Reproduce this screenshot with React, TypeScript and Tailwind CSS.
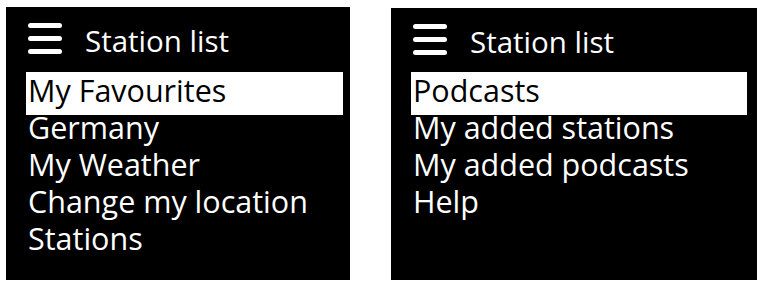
import React from "react";

const Burger = () => (
  <div className="flex flex-col justify-between w-[34px] h-[31px] mt-[16px]">
    <div className="h-[5px] rounded-full bg-white" />
    <div className="h-[5px] rounded-full bg-white" />
    <div className="h-[5px] rounded-full bg-white" />
  </div>
);

const Screen = ({
  items,
  className,
  headerClass,
}: {
  items: string[];
  className: string;
  headerClass: string;
}) => (
  <div className={`bg-black text-white ${className}`}>
    <div className={`flex items-start gap-[23px] pl-[2px] ${headerClass}`}>
      <Burger />
      <span className="text-[29.5px] leading-none mt-[19px]">Station list</span>
    </div>
    <div className="flex flex-col">
      {items.map((t, i) => (
        <div
          key={t}
          className={
            i === 0
              ? "bg-white text-black text-[30.5px] leading-[37px] pl-[2px] pb-[6px] -mb-[6px]"
              : "text-[30.5px] leading-[37px] pl-[2px]"
          }
        >
          {t}
        </div>
      ))}
    </div>
  </div>
);

export default function App() {
  return (
    <div
      className="w-[762px] h-[286px] bg-white flex"
      style={{ fontFamily: '"Open Sans", "Noto Sans", sans-serif' }}
    >
      <Screen
        className="ml-[6px] mt-[7px] w-[344px] h-[273px] pl-[20px] pr-[7px]"
        headerClass="h-[65px]"
        items={["My Favourites", "Germany", "My Weather", "Change my location", "Stations"]}
      />
      <Screen
        className="ml-[41px] mt-[8px] w-[366px] h-[272px] pl-[20px] pr-[10px]"
        headerClass="h-[64px]"
        items={["Podcasts", "My added stations", "My added podcasts", "Help"]}
      />
    </div>
  );
}
